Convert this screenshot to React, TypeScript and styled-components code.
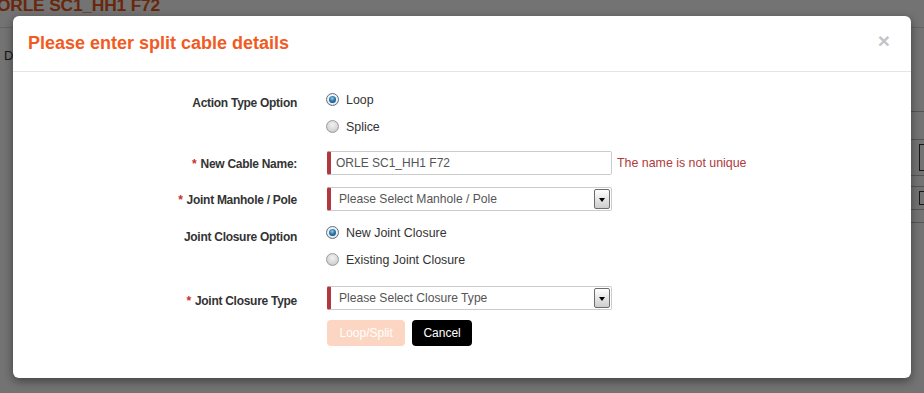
import React from "react";
import styled, { createGlobalStyle } from "styled-components";

const Global = createGlobalStyle`
  html, body { margin: 0; padding: 0; }
  body { font-family: "Liberation Sans", Arial, sans-serif; background: #fff; }
`;

const Page = styled.div`
  position: relative;
  width: 924px;
  height: 393px;
  overflow: hidden;
  background: #fff;
  display: flex;
  flex-direction: column;
`;

const PageHeader = styled.div`
  height: 27px;
  border-bottom: 1px solid #ddd;
  display: flex;
  align-items: flex-start;
`;

const PageTitle = styled.h1`
  margin: -5px 0 0 -3px;
  font-size: 17.4px;
  font-weight: bold;
  color: #e8581c;
  line-height: 20px;
  letter-spacing: -0.2px;
`;

const PageBody = styled.div`
  display: flex;
  justify-content: space-between;
  flex: 1;
`;

const TabText = styled.div`
  margin: 20px 0 0 4px;
  font-size: 13px;
  color: #333;
`;

const SideTable = styled.div`
  width: 14px;
  margin-top: 55px;
  display: flex;
  flex-direction: column;
`;

const SideLine = styled.div<{ $h: number; $box?: boolean }>`
  height: ${(p) => p.$h}px;
  border-bottom: 1px solid #bbb;
  position: relative;
  &::after {
    content: "";
    display: ${(p) => (p.$box ? "block" : "none")};
    position: absolute;
    left: 9px;
    top: 4px;
    bottom: 4px;
    width: 8px;
    border: 1px solid #333;
  }
`;

const Overlay = styled.div`
  position: absolute;
  inset: 0;
  background: rgba(0, 0, 0, 0.55);
`;

const Modal = styled.div`
  position: absolute;
  left: 13px;
  top: 16px;
  width: 898px;
  height: 362px;
  background: #fff;
  border-radius: 6px;
  box-shadow: 0 3px 10px rgba(0, 0, 0, 0.45);
  display: flex;
  flex-direction: column;
`;

const ModalHeader = styled.div`
  height: 56px;
  border-bottom: 1px solid #e5e5e5;
  display: flex;
  align-items: center;
  justify-content: space-between;
  padding: 0 15px;
  box-sizing: border-box;
`;

const ModalTitle = styled.h3`
  margin: 0;
  font-size: 18px;
  font-weight: bold;
  color: #f15a22;
`;

const Close = styled.span`
  font-size: 21px;
  font-weight: bold;
  color: #c4c4c4;
  line-height: 1;
  margin-top: -7px;
  margin-right: 6px;
`;

const Form = styled.div`
  padding-top: 14px;
  display: flex;
  flex-direction: column;
`;

const Row = styled.div<{ $mt?: number }>`
  display: grid;
  grid-template-columns: 284px 1fr;
  column-gap: 30px;
  margin-top: ${(p) => p.$mt ?? 0}px;
  align-items: start;
`;

const Label = styled.div<{ $pt?: number }>`
  text-align: right;
  font-size: 12px;
  font-weight: bold;
  color: #333;
  line-height: 14px;
  letter-spacing: -0.28px;
  padding-top: ${(p) => p.$pt ?? 0}px;
`;

const Star = styled.span`
  color: #c9302c;
  margin-right: 4px;
`;

const RadioGroup = styled.div`
  display: flex;
  flex-direction: column;
`;

const RadioOption = styled.label`
  height: 27px;
  display: flex;
  align-items: center;
  font-size: 12.4px;
  color: #333;
  gap: 7px;
`;

const RadioDot = styled.span<{ $checked?: boolean }>`
  width: 13px;
  height: 13px;
  box-sizing: border-box;
  border-radius: 50%;
  border: 1px solid ${(p) => (p.$checked ? "#5e6f80" : "#9b9b9b")};
  background: ${(p) =>
    p.$checked
      ? "radial-gradient(circle at 50% 40%, #fff 0, #e9eef3 60%, #b9c4cf 100%)"
      : "radial-gradient(circle at 50% 35%, #f2f2f2 0, #d4d4d4 65%, #b5b5b5 100%)"};
  display: inline-flex;
  align-items: center;
  justify-content: center;
  margin-left: -1px;
  &::after {
    content: "";
    width: 7px;
    height: 7px;
    border-radius: 50%;
    background: radial-gradient(circle at 45% 35%, #8fd0f2 0, #2d76a8 45%, #113a5c 100%);
    display: ${(p) => (p.$checked ? "block" : "none")};
  }
`;

const FieldLine = styled.div`
  display: flex;
  align-items: center;
  gap: 5px;
`;

const TextInput = styled.div`
  width: 285px;
  height: 24px;
  box-sizing: border-box;
  border: 1px solid #ccc;
  border-left: 4px solid #b0393d;
  border-radius: 2px;
  padding-left: 5px;
  display: flex;
  align-items: center;
  font-size: 12px;
  color: #555;
`;

const ErrorText = styled.span`
  font-size: 12.4px;
  color: #b0393d;
`;

const Select = styled.div`
  width: 285px;
  height: 24px;
  box-sizing: border-box;
  border: 1px solid #ccc;
  border-left: 4px solid #b0393d;
  border-radius: 2px;
  padding-left: 8px;
  padding-right: 1px;
  display: flex;
  align-items: center;
  justify-content: space-between;
  font-size: 12.1px;
  color: #555;
`;

const Arrow = styled.span`
  width: 16px;
  height: 20px;
  box-sizing: border-box;
  border: 1px solid #6c6c6c;
  border-radius: 2px;
  background: linear-gradient(#ffffff, #cdcdcd);
  display: flex;
  align-items: center;
  justify-content: center;
  &::after {
    content: "";
    border-left: 3.5px solid transparent;
    border-right: 3.5px solid transparent;
    border-top: 4px solid #000;
    margin-top: 1px;
  }
`;

const Buttons = styled.div`
  display: flex;
  gap: 7px;
`;

const Button = styled.button<{ $variant: "primary" | "dark" }>`
  height: 26px;
  border: none;
  border-radius: 4px;
  padding: 0 ${(p) => (p.$variant === "primary" ? 12.5 : 11)}px;
  font-family: "Liberation Sans", Arial, sans-serif;
  font-size: 12px;
  color: #fff;
  background: ${(p) => (p.$variant === "primary" ? "#fcd6c2" : "#000")};
  cursor: pointer;
`;

function Radio({ checked, label }: { checked?: boolean; label: string }) {
  return (
    <RadioOption>
      <RadioDot $checked={checked} />
      {label}
    </RadioOption>
  );
}

function SelectBox({ text }: { text: string }) {
  return (
    <Select>
      <span>{text}</span>
      <Arrow />
    </Select>
  );
}

export default function App() {
  return (
    <>
      <Global />
      <Page>
        <PageHeader>
          <PageTitle>ORLE SC1_HH1 F72</PageTitle>
        </PageHeader>
        <PageBody>
          <TabText>Details</TabText>
          <SideTable>
            <SideLine $h={28} />
            <SideLine $h={27} />
            <SideLine $h={35} $box />
            <SideLine $h={10} />
            <SideLine $h={22} $box />
            <SideLine $h={12} />
          </SideTable>
        </PageBody>
        <Overlay />
        <Modal>
          <ModalHeader>
            <ModalTitle>Please enter split cable details</ModalTitle>
            <Close>×</Close>
          </ModalHeader>
          <Form>
            <Row>
              <Label $pt={10}>Action Type Option</Label>
              <RadioGroup>
                <Radio checked label="Loop" />
                <Radio label="Splice" />
              </RadioGroup>
            </Row>
            <Row $mt={11}>
              <Label $pt={6}>
                <Star>*</Star>New Cable Name:
              </Label>
              <FieldLine>
                <TextInput>ORLE SC1_HH1 F72</TextInput>
                <ErrorText>The name is not unique</ErrorText>
              </FieldLine>
            </Row>
            <Row $mt={12}>
              <Label $pt={6}>
                <Star>*</Star>Joint Manhole / Pole
              </Label>
              <SelectBox text="Please Select Manhole / Pole" />
            </Row>
            <Row $mt={8}>
              <Label $pt={11}>Joint Closure Option</Label>
              <RadioGroup>
                <Radio checked label="New Joint Closure" />
                <Radio label="Existing Joint Closure" />
              </RadioGroup>
            </Row>
            <Row $mt={13}>
              <Label $pt={8}>
                <Star>*</Star>Joint Closure Type
              </Label>
              <SelectBox text="Please Select Closure Type" />
            </Row>
            <Row $mt={10}>
              <div />
              <Buttons>
                <Button $variant="primary">Loop/Split</Button>
                <Button $variant="dark">Cancel</Button>
              </Buttons>
            </Row>
          </Form>
        </Modal>
      </Page>
    </>
  );
}
